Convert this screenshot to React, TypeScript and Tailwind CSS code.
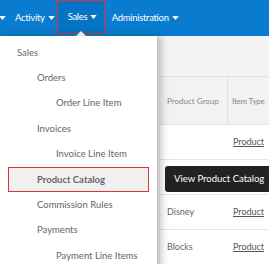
import { ReactNode } from "react";

const Caret = () => (
  <svg width="7" height="4" viewBox="0 0 8 5" className="ml-[3px] inline-block">
    <path d="M0 0 L8 0 L4 5 Z" fill="white" />
  </svg>
);

type MenuItem = { label: string; level: number; active?: boolean };

const menu: MenuItem[] = [
  { label: "Sales", level: 0 },
  { label: "Orders", level: 1 },
  { label: "Order Line Item", level: 2 },
  { label: "Invoices", level: 1 },
  { label: "Invoice Line Item", level: 2 },
  { label: "Product Catalog", level: 1, active: true },
  { label: "Commission Rules", level: 1 },
  { label: "Payments", level: 1 },
  { label: "Payment Line Items", level: 2 },
];

const indent = ["pl-[17px]", "pl-[37px]", "pl-[56px]"];

const Row = ({ children, className = "" }: { children: ReactNode; className?: string }) => (
  <div className={`flex h-[35px] items-center border-b border-[#e6e6e6] ${className}`}>{children}</div>
);

const App = () => {
  return (
    <div
      className="relative h-[264px] w-[269px] overflow-hidden bg-[#f4f4f4] text-[9.5px]"
      style={{ fontFamily: "Lato, 'Open Sans', sans-serif" }}
    >
      {/* Navbar */}
      <nav className="flex h-[36px] items-center bg-[#0a7ccf] text-[9.5px] tracking-[-0.3px] text-white">
        <div className="-ml-[4px] w-[19px]">
          <Caret />
        </div>
        <div className="flex items-center">
          Activity
          <Caret />
        </div>
        <div className="relative ml-[2px] flex h-[34px] w-[48px] items-center self-start border border-[#d8343b] bg-[#0674c4] pl-[10px]">
          Sales
          <Caret />
          <div className="absolute bottom-[-3px] left-[18px] h-0 w-0 border-x-[5px] border-b-[5px] border-x-transparent border-b-white" />
        </div>
        <div className="ml-[7px] flex items-center">
          Administration
          <Caret />
        </div>
      </nav>

      {/* Page behind */}
      <div className="flex">
        <div className="w-[160px] shrink-0">
          <div className="mt-[129px] h-[26px] w-[3px] bg-[#0a7ccf]" />
        </div>
        <div className="flex-1 text-[#666]">
          <div className="h-[41px] border-b border-[#e2e2e2]" />
          <div className="flex h-[48px] items-center border-b border-[#e2e2e2] bg-[#f2f2f2] text-[8px] text-[#888]">
            <div className="w-[67px] whitespace-nowrap pl-[7px]">Product Group</div>
            <div className="flex h-full items-center whitespace-nowrap border-l border-[#e2e2e2] pl-[4px] tracking-[-0.2px]">Item Type</div>
          </div>
          <div className="bg-white text-[9px]">
            <Row>
              <span className="ml-[73px] text-[#555] underline">Product</span>
            </Row>
            <Row>
              <span />
            </Row>
            <Row>
              <span className="w-[73px] pl-[7px]">Disney</span>
              <span className="text-[#555] underline">Product</span>
            </Row>
            <Row>
              <span className="w-[73px] pl-[7px]">Blocks</span>
              <span className="text-[#555] underline">Product</span>
            </Row>
          </div>
        </div>
      </div>

      {/* Dropdown menu */}
      <div className="absolute left-0 top-[36px] h-[240px] w-[157px] bg-white shadow-[4px_0_8px_rgba(0,0,0,0.25)]">
        <div className="pt-[4px]">
          {menu.map((m) => (
            <div
              key={m.label}
              className={`flex h-[25.4px] items-center whitespace-nowrap text-[#666] ${indent[m.level]} ${
                m.active ? "mx-[8px] border border-[#d8343b] bg-[#f0f0f0] !pl-[28px] font-bold text-[#222]" : ""
              }`}
            >
              {m.label}
            </div>
          ))}
        </div>
      </div>

      {/* Tooltip */}
      <div className="absolute left-[165px] top-[166px] flex h-[26px] w-[110px] items-center whitespace-nowrap rounded-[3px] bg-[#222] pl-[9px] text-[9.5px] text-white">
        View Product Catalog
      </div>
    </div>
  );
};

export default App;
